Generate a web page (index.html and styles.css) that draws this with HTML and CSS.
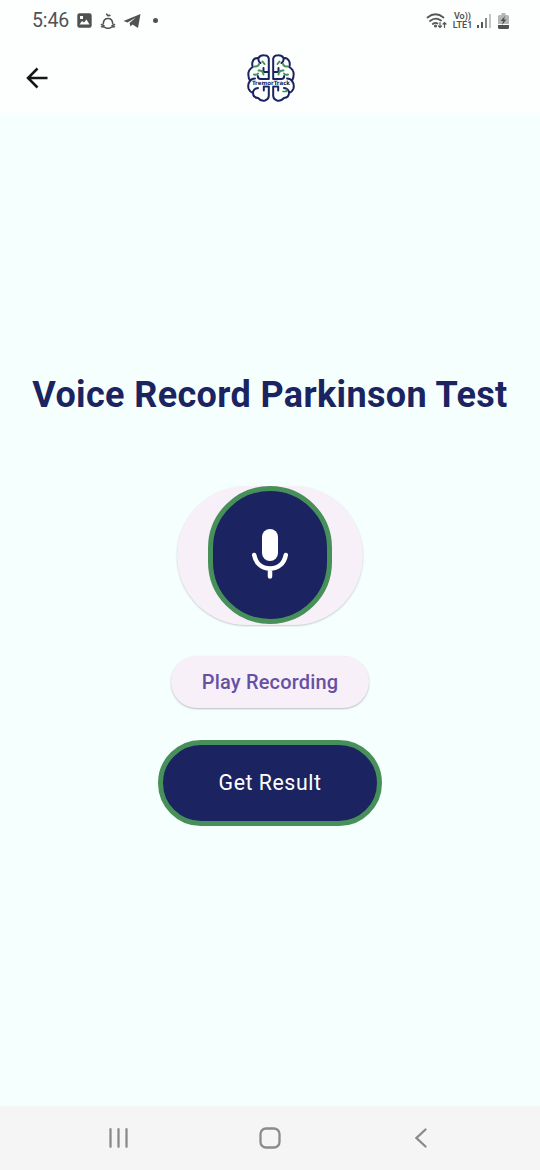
FILE: index.html
```html
<!DOCTYPE html>
<html lang="en">
<head>
<meta charset="utf-8">
<title>TremorTrack</title>
<link rel="stylesheet" href="styles.css">
</head>
<body>
<header class="top">
  <div class="status">
    <div class="status-left">
      <span class="time">5:46</span>
      <svg class="ic-photo" width="15" height="15" viewBox="0 0 15 15"><path fill="#505252" fill-rule="evenodd" d="M2.500.3h10Q14.700.3 14.700 2.500v10q0 2.200-2.200 2.200h-10Q.3 14.700.3 12.500v-10Q.3.3 2.500.3ZM2.500 11.500h10L9.500 6.500 7 9.500 5 8ZM3 3v3h3V3Z"/></svg>
      <svg class="ic-bell" width="16" height="18" viewBox="0 0 16 18" fill="none" stroke="#505252" stroke-width="1.600" stroke-linecap="round" stroke-linejoin="round"><path d="M3.300 11.500C3.500 8 5.500 6.500 8 6.500s4.500 1.500 4.700 5M1.500 12.500 4 13.700M14.500 12.500 12 13.700M1.500 14.700q3 .2 4.500 1.200 2 .8 4 0 1.500-1 4.500-1.200M6.700 2.200 8 3.800 9.800 3.400"/></svg>
      <svg class="ic-plane" width="19" height="16" viewBox="0 0 19 16"><path fill="#505252" d="M.5 8 17.500 1 15 15 9.500 11.500 7.500 13.500 6.500 10 13 4.500 4.500 9.500Z"/><path fill="#505252" d="m8 10 6-6-.5 9z"/></svg>
      <i class="dot"></i>
    </div>
    <div class="status-right">
      <svg width="22" height="18" viewBox="0 0 22 18" fill="none" stroke="#555757" stroke-width="1.700" stroke-linecap="round"><path d="M1.500 5.500Q9.500-1 17.500 5.500M4 9Q9.500 4.500 15 8.500M6.800 12Q9.500 9.800 11.500 11.500"/><path stroke-width="1.200" d="M14 10.500v5m-1.500-1.500 1.500 1.500 1.500-1.500M18.500 15.500v-5m-1.500 1.500 1.500-1.500 1.500 1.500"/><circle cx="9.500" cy="14" r=".7"/></svg>
      <span class="lte"><span>Vo))</span><span>LTE1</span></span>
      <svg class="signal" width="15" height="14" viewBox="0 0 15 14"><path fill="#555757" d="M0 11h2v3H0zM4 8h2v6H4z"/><path fill="#888a8a" d="M8 4h2v10H8z"/><path fill="#c3c5c5" d="M12 0h2v14h-2z"/></svg>
      <svg class="battery" width="11" height="16" viewBox="0 0 11 16"><path fill="#b5b7b7" d="M3.500 0h4v2H9.500Q11 2 11 3.500V11H0V3.500Q0 2 1.500 2h2z"/><path fill="#505252" d="M0 12h11v2.500Q11 16 9.500 16h-8Q0 16 0 14.500zM7 3 2.500 8H5l-1 4 4.500-5.500H6z"/></svg>
    </div>
  </div>
  <div class="appbar">
    <svg class="back" width="22" height="22" viewBox="0 0 22 22" fill="none" stroke="#151717" stroke-width="2.500"><path d="M21.500 11H2M11.500 1.500 2 11l9.500 9.500"/></svg>
    <svg class="logo" width="48" height="48" viewBox="0 0 48 48" fill="none" stroke-linecap="round" stroke-linejoin="round">
      <defs>
        <g id="half">
          <path stroke="#1b2460" stroke-width="2" d="M21.800 24.500v-20Q21 1.300 17 1.300 13 1.200 11.500 4 7 3.500 5.500 8q-.7 3 .3 5Q1.500 15.500 1.300 20q0 4 1.700 7-2.500 3-1.500 7.500Q2.800 38 6 39q0 4.500 5 5 3 3.500 7 2.500 3.500-1 3.800-4.500V32.500h-5v4M21.800 25h-8q-3 0-3-3M21.800 18h-5.300v-4M3 27q1.500-2.500 5-2.500M11.500 4.500q-.5 3 2 4.500M6 38.500q.5-4 5-4.500"/>
          <path stroke="#45905b" stroke-width="2" d="M7.500 12.500q3.500.5 4.500-2.500M11.500 16.500q4.500-.5 5 4M7 20.500q2.500 1 4-1M15.500 7.500l2 2.500"/>
        </g>
      </defs>
      <use href="#half"/><use href="#half" transform="matrix(-1 0 0 1 48 0)"/>
      <path stroke="#fdffff" stroke-width="4.500" d="M7 29h34"/>
      <path stroke="#45905b" stroke-width="1.600" d="M36 37.500h3.500v-2"/>
      <text class="logo-text" x="24" y="31.200" textLength="38" lengthAdjust="spacingAndGlyphs" text-anchor="middle">TremorTrack</text>
    </svg>
  </div>
</header>
<main>
  <h1>Voice Record Parkinson Test</h1>
  <button class="mic-pill"><span class="mic-disc">
    <svg width="38" height="52" viewBox="0 0 38 52"><rect x="11" y="0" width="16" height="32" rx="8" fill="#fff"/><path fill="none" stroke="#fff" stroke-width="4.500" stroke-linecap="round" d="M3.200 26C5 35 11 39.500 19 39.500S33 35 34.800 26M19 40v7.500"/></svg>
  </span></button>
  <button class="play">Play Recording</button>
  <button class="result">Get Result</button>
</main>
<nav>
  <svg width="20" height="20" viewBox="0 0 20 20"><path stroke="#8b8b8b" stroke-width="2.300" stroke-linecap="round" d="M1.500 1.200v17.600M9.500 1.200v17.600M17.500 1.200v17.600"/></svg>
  <svg class="home" width="22" height="22" viewBox="0 0 22 22"><rect x="1.500" y="1.500" width="19" height="19" rx="5.500" fill="none" stroke="#8b8b8b" stroke-width="2.300"/></svg>
  <svg width="12" height="20" viewBox="0 0 12 20"><path fill="none" stroke="#8b8b8b" stroke-width="2.300" stroke-linecap="round" d="M10.500 1.500 1.500 10l9 8.500"/></svg>
</nav>
</body>
</html>
```
FILE: styles.css
```css
* { box-sizing: border-box; }
body { margin: 0; width: 540px; height: 1170px; display: flex; flex-direction: column; background: #f5fffe; font-family: Roboto, sans-serif; overflow: hidden; }
svg { display: block; flex: none; }
.top { height: 115px; background: #fdffff; }
.status { height: 41px; padding: 0 31px 0 32px; display: flex; justify-content: space-between; align-items: center; color: #505252; }
.status-left, .status-right { display: flex; align-items: center; }
.time { font-size: 19.500px; width: 45px; letter-spacing: -.1px; }
.ic-bell { margin-left: 8px; }
.ic-plane { margin-left: 7px; }
.dot { width: 5px; height: 5px; border-radius: 50%; background: #505252; margin-left: 11px; }
.lte { display: flex; flex-direction: column; align-items: center; font-size: 9px; line-height: 8.500px; font-weight: 600; margin-left: 4px; width: 21px; }
.signal { margin-left: 4px; }
.battery { margin-left: 6px; }
.appbar { display: grid; grid-template-columns: 221px 48px; height: 74px; padding-left: 26px; align-items: center; }
.logo-text { font: 900 5.800px "DejaVu Sans", sans-serif; fill: #1b2460; }
main { flex: 1; display: flex; flex-direction: column; align-items: center; padding-top: 257px; }
h1 { margin: 0 0 69px; color: #1b2460; font-size: 36px; letter-spacing: .36px; line-height: 46px; height: 45px; font-weight: 700; white-space: nowrap; }
button { border: 0; padding: 0; font-family: inherit; display: flex; align-items: center; justify-content: center; }
.mic-pill { width: 186px; height: 139px; border-radius: 70px; background: #f7f0f9; box-shadow: 0 1px 2px #00000033; margin-bottom: 31px; align-items: flex-start; }
.mic-disc { width: 124px; height: 138px; border: 5px solid #48905a; border-radius: 62px; background: #1b2460; display: flex; align-items: center; justify-content: center; }
.play { width: 198px; height: 52px; padding-bottom: 1px; border-radius: 26px; background: #f7f0f9; box-shadow: 0 1px 2px #00000042; color: #6750a4; font-size: 20px; letter-spacing: .17px; font-weight: 500; margin-bottom: 32px; }
.result { width: 224px; height: 86px; padding-bottom: 2px; border: 5px solid #48905a; border-radius: 43px; background: #1b2460; color: #fff; font-size: 21.300px; letter-spacing: .55px; }
nav { height: 64px; background: #f5f5f5; display: flex; align-items: center; justify-content: space-between; padding: 0 113px 0 109px; }
.home { margin-right: 5px; }
```
